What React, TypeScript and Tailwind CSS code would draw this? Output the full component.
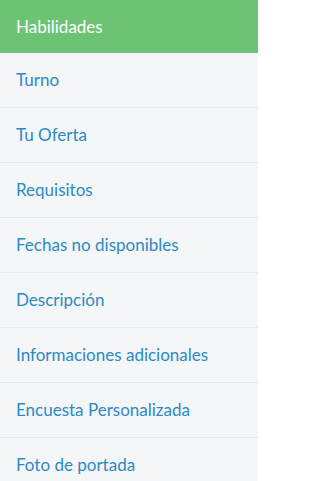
import React from "react";

const items = [
  "Turno",
  "Tu Oferta",
  "Requisitos",
  "Fechas no disponibles",
  "Descripción",
  "Informaciones adicionales",
  "Encuesta Personalizada",
  "Foto de portada",
];

export default function App() {
  return (
    <div className="w-[258px] h-[481px] overflow-hidden bg-[#f5f6f8] font-['Lato',sans-serif]">
      <div className="h-[53px] bg-[#6cc373] flex items-center px-4 text-white text-[17px]">
        Habilidades
      </div>
      {items.map((t) => (
        <div
          key={t}
          className="h-[55px] flex items-center px-4 border-b border-[#e6e8eb] text-[#2b8ac6] text-[17px]"
        >
          {t}
        </div>
      ))}
    </div>
  );
}
